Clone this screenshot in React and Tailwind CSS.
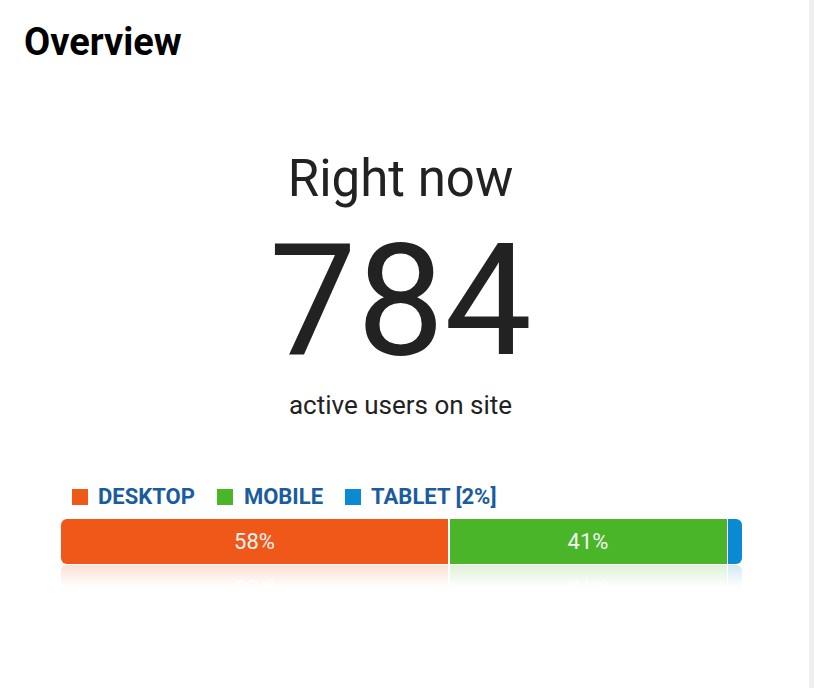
export default function App() {
  const segs = [
    { label: "58%", color: "bg-[#f0581a]", w: 387 },
    { label: "41%", color: "bg-[#4bb52a]", w: 277 },
    { label: "", color: "bg-[#0a8ad0]", w: 14 },
  ];
  const Bar = ({ textCls }) => (
    <div className="flex h-[45px] w-[681px] overflow-hidden rounded-[6px] gap-[1.5px] bg-white">
      {segs.map((s, i) => (
        <div
          key={i}
          className={`${s.color} flex items-center justify-center text-[22px] ${textCls}`}
          style={{ width: s.w }}
        >
          {s.label}
        </div>
      ))}
    </div>
  );
  return (
    <div className="flex h-[688px] w-[814px] bg-[#efefef] font-['Roboto',sans-serif]">
      <div className="w-[809px] h-full bg-white flex flex-col">
        <h1 className="pl-[24px] pt-[19px] text-[38px] leading-[46px] font-bold text-black">Overview</h1>
        <div className="w-[801px] flex flex-col items-center">
          <div className="mt-[88px] text-[51px] leading-[52px] text-[#222]">Right now</div>
          <div className="mt-[6px] text-[156px] leading-[180px] text-[#222]">784</div>
          <div className="text-[26px] leading-[28px] text-[#222]">active users on site</div>
        </div>
        <div className="ml-[72px] mt-[66px] flex items-center text-[22px] font-bold text-[#1a5c9e] leading-[24px]">
          <span className="w-[16px] h-[16px] bg-[#f0581a] mr-[10px]"></span>
          <span>DESKTOP</span>
          <span className="w-[16px] h-[16px] bg-[#4bb52a] ml-[22px] mr-[11px]"></span>
          <span>MOBILE</span>
          <span className="w-[16px] h-[16px] bg-[#0a8ad0] ml-[22px] mr-[10px]"></span>
          <span>TABLET [2%]</span>
        </div>
        <div className="ml-[61px] mt-[10px]">
          <Bar textCls="text-[#f2f2f2]" />
          <div className="relative mt-[1px] h-[22px] overflow-hidden" aria-hidden="true">
            <div className="scale-y-[-1] origin-top translate-y-[45px] opacity-30">
              <Bar textCls="text-white" />
            </div>
            <div className="absolute inset-0 bg-gradient-to-b from-white/40 to-white"></div>
          </div>
        </div>
      </div>
    </div>
  );
}
